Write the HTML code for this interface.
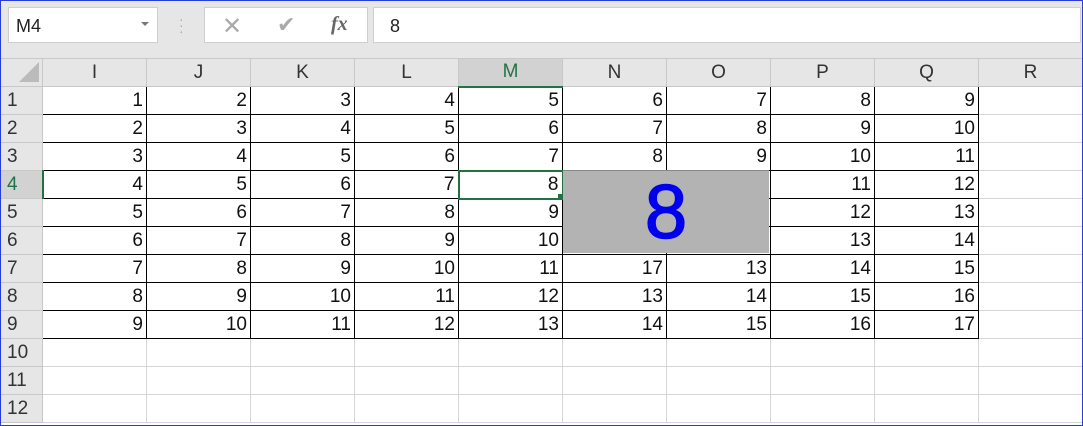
<!DOCTYPE html><html><head><style>
body{margin:0;width:1083px;height:426px;overflow:hidden;font-family:"Liberation Sans",sans-serif;background:#fff;position:relative}
.frame{position:absolute;left:0;top:0;width:1081px;height:424px;border:1px solid #2a3cd8;pointer-events:none;z-index:9}
.top{position:absolute;left:0;top:0;width:1083px;height:58px;background:#e6e6e6}
.box{position:absolute;background:#fff;border:1px solid #cfcfcf;box-sizing:border-box}
table{position:absolute;left:0px;top:58px;border-collapse:collapse;table-layout:fixed;font-size:19px}
td{height:27px;padding:1px 3px 0 0;border:1px solid #d6d6d6;text-align:right;overflow:hidden;color:#111;box-sizing:border-box}
td.h{background:#e6e6e6;text-align:center;color:#333;border-color:#c8c8c8;padding:0}
td.r{background:#e6e6e6;text-align:left;padding-left:6px;color:#333;border-color:#c8c8c8}
td.d{border-color:#000}
</style></head><body>
<div class="top"></div>
<div class="box" style="left:8px;top:7px;width:150px;height:36px;font-size:18px;padding:8px 0 0 7px;color:#222">M4<span style="position:absolute;right:8px;top:14px;border:4px solid transparent;border-top:4px solid #777;width:0;height:0"></span></div>
<div style="position:absolute;left:179px;top:16px;color:#aaa;font-size:14px;line-height:6px">·<br>·<br>·</div>
<div class="box" style="left:204px;top:7px;width:164px;height:36px">
<span style="position:absolute;left:17px;top:4px;font-size:24px;color:#aaa">✕</span>
<span style="position:absolute;left:72px;top:4px;font-size:22px;color:#aaa">✔</span>
<span style="position:absolute;left:126px;top:5px;font-size:20px;font-style:italic;font-family:'Liberation Serif',serif;color:#666;font-weight:bold">fx</span></div>
<div class="box" style="left:373px;top:7px;width:708px;height:36px;font-size:18px;padding:8px 0 0 16px;color:#222">8</div>
<table>
<colgroup><col style="width:42px"><col style="width:104px"><col style="width:104px"><col style="width:104px"><col style="width:104px"><col style="width:104px"><col style="width:104px"><col style="width:104px"><col style="width:104px"><col style="width:104px"><col style="width:104px"></colgroup>
<tr style="height:28px"><td class="h" style="position:relative"><div style="position:absolute;right:3px;bottom:4px;border-left:20px solid transparent;border-bottom:20px solid #bbb;width:0;height:0"></div></td><td class="h">I</td><td class="h">J</td><td class="h">K</td><td class="h">L</td><td class="h" style="background:#d2d2d2;color:#217346;border-bottom:2px solid #217346">M</td><td class="h">N</td><td class="h">O</td><td class="h">P</td><td class="h">Q</td><td class="h">R</td></tr>
<tr style="height:28px"><td class="r">1</td><td class="d">1</td><td class="d">2</td><td class="d">3</td><td class="d">4</td><td class="d">5</td><td class="d">6</td><td class="d">7</td><td class="d">8</td><td class="d">9</td><td></td></tr>
<tr style="height:28px"><td class="r">2</td><td class="d">2</td><td class="d">3</td><td class="d">4</td><td class="d">5</td><td class="d">6</td><td class="d">7</td><td class="d">8</td><td class="d">9</td><td class="d">10</td><td></td></tr>
<tr style="height:28px"><td class="r">3</td><td class="d">3</td><td class="d">4</td><td class="d">5</td><td class="d">6</td><td class="d">7</td><td class="d">8</td><td class="d">9</td><td class="d">10</td><td class="d">11</td><td></td></tr>
<tr style="height:28px"><td class="r" style="background:#d2d2d2;color:#217346;border-right:2px solid #217346">4</td><td class="d">4</td><td class="d">5</td><td class="d">6</td><td class="d">7</td><td class="d" style="border:2px solid #217346">8</td><td class="d"></td><td class="d"></td><td class="d">11</td><td class="d">12</td><td></td></tr>
<tr style="height:28px"><td class="r">5</td><td class="d">5</td><td class="d">6</td><td class="d">7</td><td class="d">8</td><td class="d">9</td><td class="d"></td><td class="d"></td><td class="d">12</td><td class="d">13</td><td></td></tr>
<tr style="height:28px"><td class="r">6</td><td class="d">6</td><td class="d">7</td><td class="d">8</td><td class="d">9</td><td class="d">10</td><td class="d"></td><td class="d"></td><td class="d">13</td><td class="d">14</td><td></td></tr>
<tr style="height:28px"><td class="r">7</td><td class="d">7</td><td class="d">8</td><td class="d">9</td><td class="d">10</td><td class="d">11</td><td class="d">17</td><td class="d">13</td><td class="d">14</td><td class="d">15</td><td></td></tr>
<tr style="height:28px"><td class="r">8</td><td class="d">8</td><td class="d">9</td><td class="d">10</td><td class="d">11</td><td class="d">12</td><td class="d">13</td><td class="d">14</td><td class="d">15</td><td class="d">16</td><td></td></tr>
<tr style="height:28px"><td class="r">9</td><td class="d">9</td><td class="d">10</td><td class="d">11</td><td class="d">12</td><td class="d">13</td><td class="d">14</td><td class="d">15</td><td class="d">16</td><td class="d">17</td><td></td></tr>
<tr style="height:28px"><td class="r">10</td><td></td><td></td><td></td><td></td><td></td><td></td><td></td><td></td><td></td><td></td></tr>
<tr style="height:28px"><td class="r">11</td><td></td><td></td><td></td><td></td><td></td><td></td><td></td><td></td><td></td><td></td></tr>
<tr style="height:28px"><td class="r">12</td><td></td><td></td><td></td><td></td><td></td><td></td><td></td><td></td><td></td><td></td></tr>
</table>
<div style="position:absolute;left:558px;top:194px;width:5px;height:5px;background:#217346"></div>
<div style="position:absolute;left:563px;top:170px;width:206px;height:83px;background:#b3b3b3;border-top:1px solid #888;box-sizing:border-box;text-align:center;color:#0000ee;font-size:76px;-webkit-text-stroke:1.5px #0000ee;line-height:84px">8</div>
<div class="frame"></div>
</body></html>
